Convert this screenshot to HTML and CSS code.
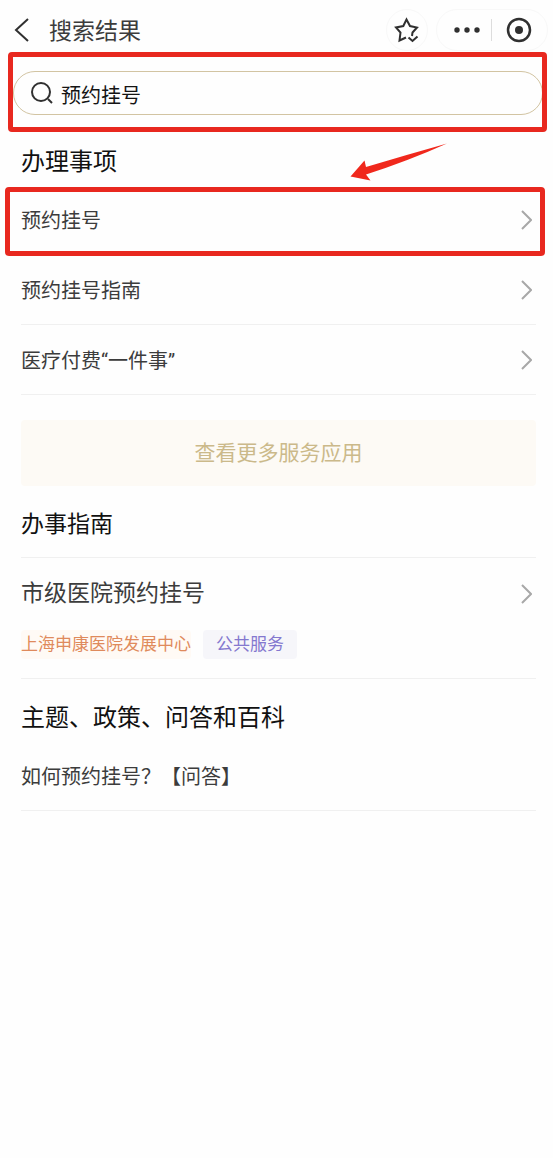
FILE: index.html
```html
<!DOCTYPE html>
<html lang="zh-CN">
<head>
<meta charset="utf-8">
<meta name="viewport" content="width=device-width, initial-scale=1">
<title>搜索结果</title>
<link rel="stylesheet" href="styles.css">
</head>
<body>
<header class="topbar">
  <button class="icon-btn back" type="button" aria-label="返回">
    <svg width="16" height="26" viewBox="0 0 16 26"><path d="M14 2 2 13 14 24"/></svg>
  </button>
  <h1 class="page-title">搜索结果</h1>
  <button class="icon-btn favorite" type="button" aria-label="收藏">
    <svg width="28" height="28" viewBox="0 0 28 28"><path d="M13 21.500 6.500 24.500 7.500 16.500 3 11.500 10.300 10 13.500 3.500 17 10 24 11.500 19.500 16.500 19 20M15.500 21.500 19.500 25 24.500 20.500"/></svg>
  </button>
  <div class="capsule">
    <button class="icon-btn" type="button" aria-label="更多">
      <svg class="solid" width="28" height="8" viewBox="0 0 28 8"><circle cx="4" cy="4" r="2.700"/><circle cx="14" cy="4" r="2.700"/><circle cx="24" cy="4" r="2.700"/></svg>
    </button>
    <button class="icon-btn close" type="button" aria-label="关闭">
      <svg width="26" height="26" viewBox="0 0 26 26"><circle cx="13" cy="13" r="11"/><circle class="dot" cx="13" cy="13" r="4"/></svg>
    </button>
  </div>
</header>

<main>
  <form class="search marked" role="search">
    <label class="search-box">
      <svg width="24" height="24" viewBox="0 0 24 24" aria-hidden="true"><circle cx="10" cy="11" r="9"/><path d="M17 18 21 22"/></svg>
      <input type="text" value="预约挂号" aria-label="搜索">
    </label>
  </form>

  <section class="section">
    <h2 class="heading">办理事项
      <svg class="arrow" width="98" height="38" viewBox="0 0 98 38" aria-hidden="true"><path d="M0.500 33.500 14.500 17.500 16 24Q56 12 97 0.500 58 18 16 31.500L20.500 37.500Z"/></svg>
    </h2>
    <ul class="list">
      <li class="marked row-mark"><a class="row" href="#">预约挂号<svg class="chevron" width="12" height="22" viewBox="0 0 12 22"><path d="M2 2 11 11 2 20"/></svg></a></li>
      <li><a class="row" href="#">预约挂号指南<svg class="chevron" width="12" height="22" viewBox="0 0 12 22"><path d="M2 2 11 11 2 20"/></svg></a></li>
      <li><a class="row" href="#">医疗付费“一件事”<svg class="chevron" width="12" height="22" viewBox="0 0 12 22"><path d="M2 2 11 11 2 20"/></svg></a></li>
    </ul>
    <button class="more" type="button">查看更多服务应用</button>
  </section>

  <section class="section">
    <h2 class="heading guide-heading">办事指南</h2>
    <article class="guide">
      <a class="guide-title" href="#">市级医院预约挂号<svg class="chevron" width="12" height="22" viewBox="0 0 12 22"><path d="M2 2 11 11 2 20"/></svg></a>
      <div class="tags"><span class="tag org">上海申康医院发展中心</span><span class="tag service">公共服务</span></div>
    </article>
  </section>

  <section class="section">
    <h2 class="heading topic-heading">主题、政策、问答和百科</h2>
    <ul class="list">
      <li><a class="row" href="#">如何预约挂号？【问答】</a></li>
    </ul>
  </section>
</main>
</body>
</html>
```

FILE: styles.css
```css
* { box-sizing: border-box; }

body {
  margin: 0;
  min-height: 100vh;
  background: #fefefe;
  color: #3c3c3c;
  font-family: Roboto, "Noto Sans CJK SC", sans-serif;
  font-size: 20px;
}

svg {
  flex: none;
  fill: none;
  stroke: #303030;
  stroke-width: 2;
}

button, input { font: inherit; }
a { color: inherit; text-decoration: none; }

/* Top bar */
.topbar {
  display: flex;
  align-items: center;
  height: 60px;
  padding: 0 5px 0 14px;
}

.icon-btn {
  display: flex;
  align-items: center;
  justify-content: center;
  padding: 0;
  border: 0;
  background: none;
}

.page-title {
  flex: 1;
  margin: 0 0 0 19px;
  padding-top: 3px;
  font-size: 23px;
  font-weight: 400;
  line-height: 36px;
}

.favorite {
  width: 42px;
  height: 42px;
  margin-right: 8px;
  border: 1px solid #f8f8f8;
  border-radius: 50%;
}

.capsule {
  display: flex;
  align-items: center;
  height: 42px;
  padding: 0 15px 0 16px;
  border: 1px solid #f8f8f8;
  border-radius: 21px;
}

.solid, .dot { fill: #303030; stroke: none; }
.close svg { stroke-width: 2.5; }

.close {
  height: 22px;
  margin-left: 10px;
  padding-left: 14px;
  border-left: 1px solid #dddddd;
}

/* Search */
.search { margin: 11px 10px 0 13px; }

.search-box {
  display: flex;
  align-items: center;
  gap: 6px;
  height: 44px;
  padding: 0 17px;
  border: 1px solid #d2c4a2;
  border-radius: 22px;
}

.search-box input {
  flex: 1;
  min-width: 0;
  height: 40px;
  padding: 2px 0 0;
  border: 0;
  outline: 0;
  background: none;
  color: #141414;
}

/* Red highlight frames */
.marked { position: relative; }

.marked::after {
  content: "";
  position: absolute;
  inset: -19px -4px -17px -5px;
  border: 5px solid #e8281f;
  border-radius: 4px;
  pointer-events: none;
}

.row-mark::after { inset: 2px -9px -1px -16px; }

.arrow {
  position: absolute;
  right: 88px;
  top: 28px;
  fill: #f0281c;
  stroke: none;
}

/* Sections */
.section { padding: 0 17px 0 21px; }

.heading {
  position: relative;
  margin: 0;
  padding: 29px 0 5px;
  color: #111111;
  font-size: 24px;
  font-weight: 400;
  line-height: 36px;
}

.guide-heading {
  padding: 21px 0 14px;
  border-bottom: 1px solid #f0f0f0;
  font-size: 23px;
}

.topic-heading { padding: 21px 0 5px; }

.list {
  margin: 0;
  padding: 0;
  list-style: none;
}

.row {
  display: flex;
  align-items: center;
  justify-content: space-between;
  height: 70px;
  border-bottom: 1px solid #f0f0f0;
}

.chevron {
  margin-right: 4px;
  stroke: #a8a8a8;
}

.more {
  display: block;
  width: 100%;
  height: 66px;
  margin-top: 25px;
  padding: 0 0 4px;
  border: 0;
  border-radius: 4px;
  background: #fdfaf5;
  color: #cbb98a;
  font-size: 21px;
}

.guide {
  padding: 18px 0 19px;
  border-bottom: 1px solid #f0f0f0;
}

.guide-title {
  display: flex;
  align-items: center;
  justify-content: space-between;
  font-size: 23px;
  line-height: 36px;
}

.tags {
  display: flex;
  gap: 12px;
  margin-top: 18px;
}

.tag {
  border-radius: 4px;
  font-size: 17px;
  line-height: 29px;
}

.org {
  background: #fffaf5;
  color: #df8a5c;
}

.service {
  padding: 0 13px;
  background: #f6f6fa;
  color: #8478cf;
}
```
